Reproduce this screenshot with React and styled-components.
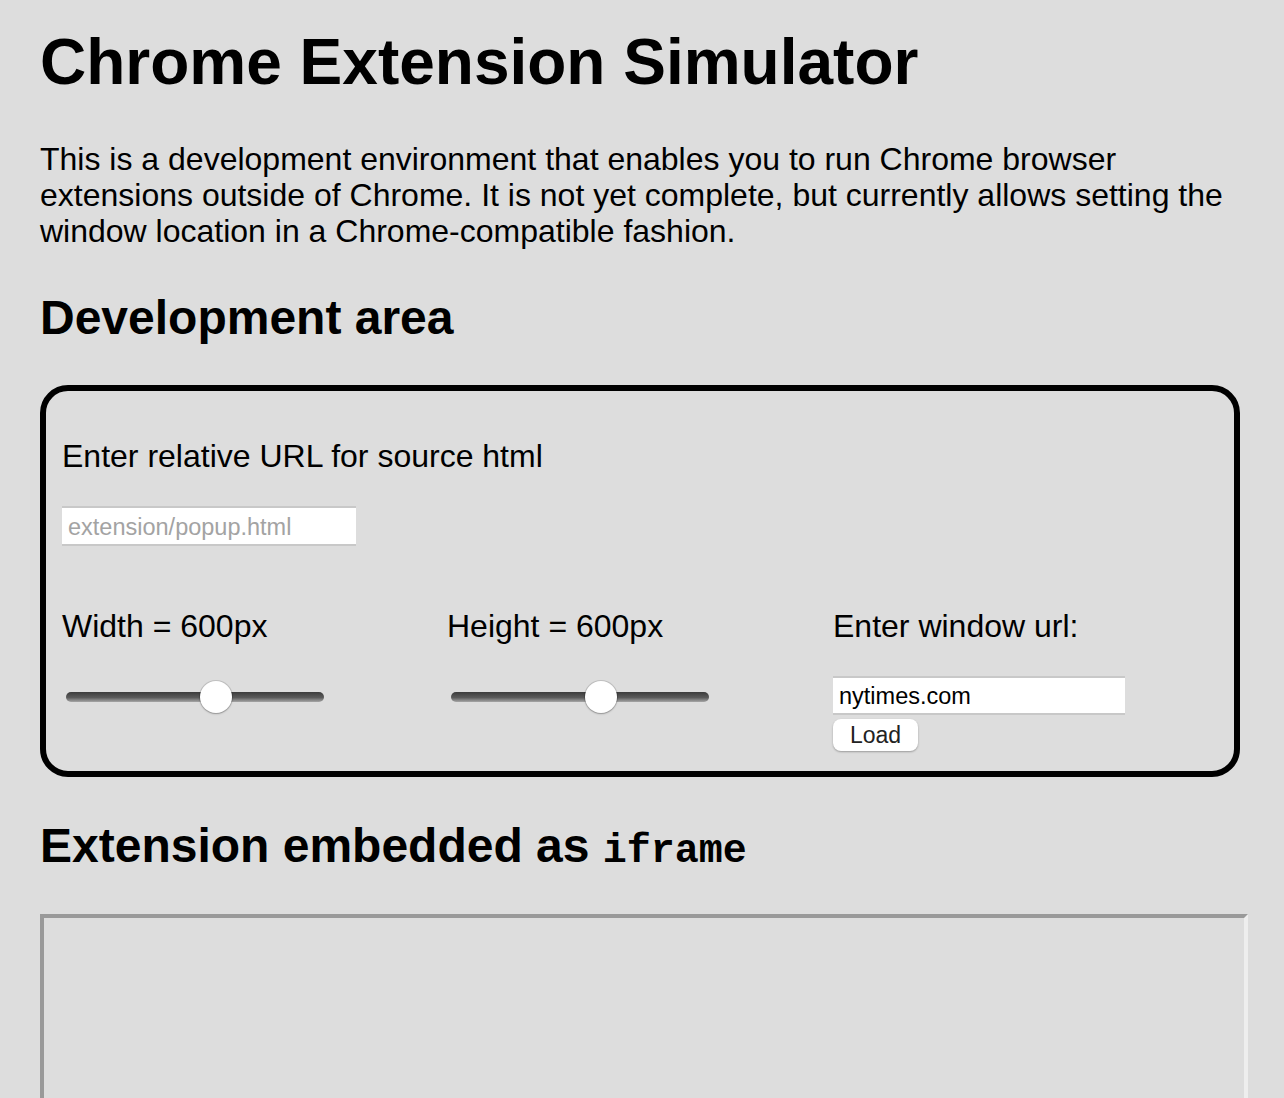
import React from 'react';
import styled, { createGlobalStyle } from 'styled-components';

const GlobalStyle = createGlobalStyle`
  html, body {
    margin: 0;
    padding: 0;
    background: #dddddd;
  }
  body {
    font-family: "Liberation Sans", Arial, Helvetica, sans-serif;
    color: #000;
  }
`;

const Page = styled.main`
  width: 1200px;
  padding: 25px 0 0 40px;
`;

const Title = styled.h1`
  margin: 0;
  font-size: 64px;
  line-height: 74px;
  font-weight: 700;
`;

const Intro = styled.p`
  margin: 42px 0 0;
  font-size: 32px;
  line-height: 36px;
`;

const Heading = styled.h2`
  margin: ${(p) => p.$top}px 0 0;
  height: 56px;
  font-size: 48px;
  line-height: 56px;
  font-weight: 700;

  code {
    font-family: "Liberation Mono", "DejaVu Sans Mono", monospace;
    font-size: 40px;
    line-height: 0;
    font-weight: 700;
  }
`;

const DevBox = styled.section`
  box-sizing: border-box;
  width: 1200px;
  margin-top: 39px;
  border: 6px solid #000;
  border-radius: 28px;
  padding: 47px 16px 20px;
`;

const Label = styled.div`
  font-size: 32px;
  line-height: 36px;
`;

const TextInput = styled.input`
  display: block;
  box-sizing: border-box;
  width: ${(p) => p.$width}px;
  height: ${(p) => p.$height}px;
  margin-top: 32px;
  padding: 2px 6px 0;
  border: none;
  border-top: 2px solid #c8c8c8;
  border-bottom: 2px solid #c8c8c8;
  background: #fff;
  font-family: "Liberation Sans", Arial, sans-serif;
  font-size: 23.5px;
  color: #000;
  outline: none;

  &::placeholder {
    color: #a3a3a3;
  }
`;

const Controls = styled.div`
  display: grid;
  grid-template-columns: 385px 386px 1fr;
  margin-top: 62px;
`;

const Column = styled.div`
  display: flex;
  flex-direction: column;
  align-items: flex-start;
`;

const Slider = styled.input`
  -webkit-appearance: none;
  appearance: none;
  width: 258px;
  height: 32px;
  margin: 37px 0 0 4px;
  background: transparent;
  outline: none;

  &::-webkit-slider-runnable-track {
    height: 10px;
    border-radius: 5px;
    background: linear-gradient(#3c3c3c, #5a5a5a 55%, #a6a6a6);
  }

  &::-webkit-slider-thumb {
    -webkit-appearance: none;
    width: 32px;
    height: 32px;
    margin-top: -11px;
    border-radius: 50%;
    background: #fff;
    box-shadow: 0 0 0 1px rgba(0, 0, 0, 0.12), 0 1px 2px rgba(0, 0, 0, 0.25);
  }
`;

const LoadButton = styled.button`
  box-sizing: border-box;
  width: 85px;
  height: 32px;
  margin-top: 4px;
  padding: 0;
  border: none;
  border-radius: 8px;
  background: #fff;
  box-shadow: 0 1px 2px rgba(0, 0, 0, 0.3);
  font-family: "Liberation Sans", Arial, sans-serif;
  font-size: 23px;
  color: #222;
`;

const Frame = styled.iframe`
  display: block;
  box-sizing: border-box;
  width: 1208px;
  height: 1208px;
  margin-top: 40px;
  border-style: solid;
  border-width: 4px;
  border-color: #999 #eee #eee #999;
  background: transparent;
`;

const App = () => {
  return (
    <>
      <GlobalStyle />
      <Page>
        <Title>Chrome Extension Simulator</Title>
        <Intro>
          This is a development environment that enables you to run Chrome browser
          extensions outside of Chrome. It is not yet complete, but currently allows
          setting the window location in a Chrome-compatible fashion.
        </Intro>

        <Heading $top={41}>Development area</Heading>
        <DevBox>
          <Label>Enter relative URL for source html</Label>
          <TextInput $width={294} $height={40} placeholder="extension/popup.html" />

          <Controls>
            <Column>
              <Label>Width = 600px</Label>
              <Slider type="range" min="0" max="1012" defaultValue="600" />
            </Column>
            <Column>
              <Label>Height = 600px</Label>
              <Slider type="range" min="0" max="1012" defaultValue="600" />
            </Column>
            <Column>
              <Label>Enter window url:</Label>
              <TextInput $width={292} $height={39} defaultValue="nytimes.com" />
              <LoadButton>Load</LoadButton>
            </Column>
          </Controls>
        </DevBox>

        <Heading $top={41}>
          Extension embedded as <code>iframe</code>
        </Heading>
        <Frame title="extension" />
      </Page>
    </>
  );
};

export default App;
